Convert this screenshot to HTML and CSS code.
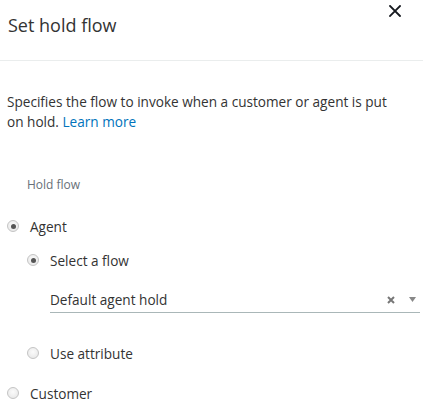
FILE: index.html
```html
<!DOCTYPE html>
<html>
<head>
<meta charset="utf-8">
<link rel="stylesheet" href="styles.css">
</head>
<body>
<div class="panel">
  <header class="head">
    <h1 class="title">Set hold flow</h1>
    <button class="close" aria-label="Close">
      <svg width="12" height="12" viewBox="0 0 12 12"><path d="M1 1L11 11M11 1L1 11" stroke="#16191f" stroke-width="1.8" stroke-linecap="square"/></svg>
    </button>
  </header>
  <div class="body">
    <p class="desc">Specifies the flow to invoke when a customer or agent is put on hold. <a class="link" href="#">Learn more</a></p>
    <div class="label">Hold flow</div>
    <div class="opt top">
      <span class="radio on"></span><span class="opt-text">Agent</span>
    </div>
    <div class="sub">
      <div class="opt">
        <span class="radio on"></span><span class="opt-text">Select a flow</span>
      </div>
      <div class="select">
        <span class="select-value">Default agent hold</span>
        <span class="clear">
          <svg width="8" height="8" viewBox="0 0 8 8"><path d="M1 1L7 7M7 1L1 7" stroke="#777" stroke-width="2"/></svg>
        </span>
        <span class="caret">
          <svg width="7" height="5" viewBox="0 0 7 5"><path d="M0 0H7L3.5 5Z" fill="#888"/></svg>
        </span>
      </div>
      <div class="opt attr">
        <span class="radio"></span><span class="opt-text">Use attribute</span>
      </div>
    </div>
    <div class="opt cust">
      <span class="radio"></span><span class="opt-text">Customer</span>
    </div>
  </div>
</div>
</body>
</html>
```
FILE: styles.css
```css
* { box-sizing: border-box; }
html, body { margin: 0; padding: 0; background: #fff; }
body {
  font-family: "Open Sans", "Noto Sans", sans-serif;
  color: #333;
  width: 423px;
  height: 405px;
  overflow: hidden;
}
.head {
  display: flex;
  justify-content: space-between;
  align-items: flex-start;
  height: 61px;
  border-bottom: 1px solid #eaeded;
  padding: 0 0 0 8px;
}
.title {
  margin: 12px 0 0;
  font-size: 18px;
  font-weight: 400;
  color: #333;
  line-height: 26px;
}
.close {
  border: 0;
  background: none;
  padding: 0;
  margin: 5px 22px 0 0;
  width: 12px;
  height: 12px;
  display: flex;
}
.body { padding: 0 0 0 7px; }
.desc {
  margin: 31px 0 0;
  font-size: 13.6px;
  line-height: 20px;
  width: 390px;
  color: #333;
}
.link { color: #0073bb; text-decoration: none; }
.label {
  margin: 45px 0 0 20px;
  font-size: 12px;
  color: #687078;
  line-height: 16px;
}
.opt {
  display: flex;
  align-items: center;
  height: 20px;
  font-size: 13.6px;
}
.top { margin-top: 23px; }
.radio {
  width: 12px;
  height: 12px;
  border-radius: 50%;
  border: 1px solid #c4c4c4;
  background: radial-gradient(circle at 50% 40%, #fbfbfb 0%, #e4e4e4 100%);
  margin-right: 11px;
  position: relative;
  flex: none;
}
.radio.on::after {
  content: "";
  position: absolute;
  left: 2.5px;
  top: 2.5px;
  width: 5px;
  height: 5px;
  border-radius: 50%;
  background: #555;
}
.sub { padding-left: 20px; }
.sub .opt:first-child { margin-top: 14px; }
.select {
  display: flex;
  align-items: center;
  margin: 20px 0 0 23px;
  width: 370px;
  height: 23px;
  border-bottom: 1px solid #aab7b8;
  padding-bottom: 3px;
  font-size: 13.6px;
}
.select-value { flex: 1; }
.clear { display: flex; margin-right: 14px; }
.caret { display: flex; margin-right: 4px; }
.attr { margin-top: 30px; }
.cust { margin-top: 20px; }
```
